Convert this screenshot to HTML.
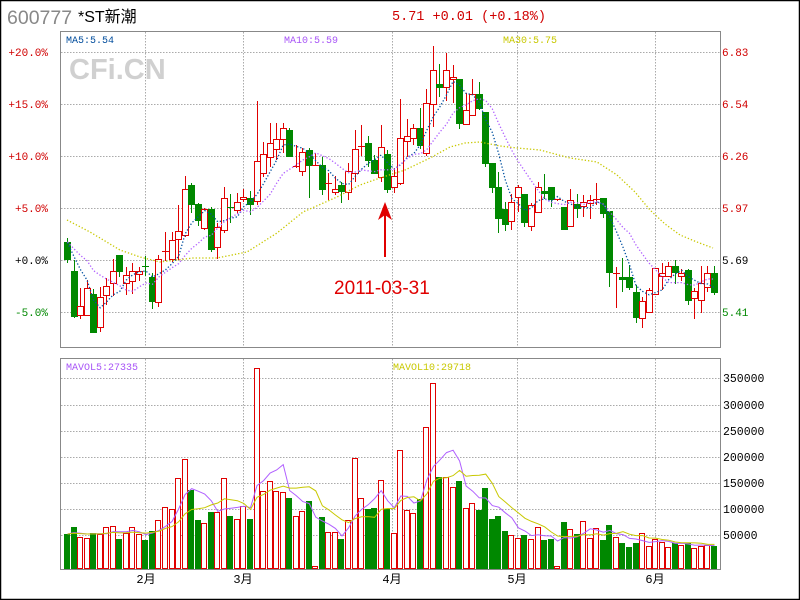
<!DOCTYPE html>
<html><head><meta charset="utf-8"><style>
html,body{margin:0;padding:0;background:#fff;}
svg{display:block;}
text{font-family:"Liberation Mono","Noto Sans CJK SC",monospace;}
</style></head><body>
<svg id="s" width="800" height="600" xmlns="http://www.w3.org/2000/svg">
<rect x="0.5" y="0.5" width="799" height="599" fill="#fff" stroke="#000" stroke-width="1.5"/>
<text x="7" y="24" font-size="19.5" fill="#888" style="font-family:'Liberation Sans',sans-serif">600777</text>
<text x="78" y="22" font-size="16" fill="#000" style="font-family:'Liberation Sans','Noto Sans CJK SC',sans-serif">*ST新潮</text>
<text x="392" y="20" font-size="13.5" fill="#d00000">5.71 +0.01 (+0.18%)</text>
<g id="grid" stroke="#aaa" stroke-dasharray="1.5 1.5" stroke-width="1"></g>
<rect x="60.5" y="31.5" width="660" height="316" fill="none" stroke="#888"/>
<rect x="60.5" y="358.5" width="660" height="211" fill="none" stroke="#888"/>
<text x="69" y="79" font-size="29" font-weight="bold" fill="#d0d0d0" style="font-family:'Liberation Sans',sans-serif">CFi.CN</text>
<text x="66" y="43" font-size="10" fill="#004c9c">MA5:5.54</text>
<text x="284" y="43" font-size="10" fill="#a855f7">MA10:5.59</text>
<text x="503" y="43" font-size="10" fill="#c8c800">MA30:5.75</text>
<text x="66" y="370" font-size="10" fill="#a855f7">MAVOL5:27335</text>
<text x="393" y="370" font-size="10" fill="#c8c800">MAVOL10:29718</text>
<g font-size="11" text-anchor="end">
<text x="48" y="56" fill="#d00000">+20.0%</text>
<text x="48" y="108" fill="#d00000">+15.0%</text>
<text x="48" y="160" fill="#d00000">+10.0%</text>
<text x="48" y="212" fill="#d00000">+5.0%</text>
<text x="48" y="264" fill="#000">+0.0%</text>
<text x="48" y="316" fill="#008800">-5.0%</text>
</g>
<g font-size="11">
<text x="722" y="56" fill="#d00000">6.83</text>
<text x="722" y="108" fill="#d00000">6.54</text>
<text x="722" y="160" fill="#d00000">6.26</text>
<text x="722" y="212" fill="#d00000">5.97</text>
<text x="722" y="264" fill="#000">5.69</text>
<text x="722" y="316" fill="#008800">5.41</text>
</g>
<g font-size="11.5" fill="#000" style="font-family:'Liberation Sans',sans-serif">
<text x="723" y="382">350000</text>
<text x="723" y="409">300000</text>
<text x="723" y="435">250000</text>
<text x="723" y="461">200000</text>
<text x="723" y="487">150000</text>
<text x="723" y="513">100000</text>
<text x="723" y="539">50000</text>
</g>
<g font-size="12" fill="#000" text-anchor="middle" style="font-family:'Liberation Sans','Noto Sans CJK SC',sans-serif">
<text x="146" y="583">2月</text>
<text x="243" y="583">3月</text>
<text x="392" y="583">4月</text>
<text x="517" y="583">5月</text>
<text x="655" y="583">6月</text>
</g>
<g id="vol"></g>
<g id="cdl"></g>
<g id="ma"></g>
<text x="334" y="294" font-size="19" fill="#e00000" style="font-family:'Liberation Sans',sans-serif">2011-03-31</text>
<line x1="385" y1="215" x2="385" y2="257" stroke="#e00000" stroke-width="2"/>
<polygon points="385,202 378,220 385,215 392,220" fill="#e00000"/>
</svg>
<script>
var NS="http://www.w3.org/2000/svg";
function el(p,t,a){var e=document.createElementNS(NS,t);for(var k in a)e.setAttribute(k,a[k]);p.appendChild(e);return e;}
var g=document.getElementById('grid');
[52,104,156,208,260,312].forEach(function(y){el(g,'line',{x1:61,x2:720,y1:y+.5,y2:y+.5});});
[378,405,431,457,483,509,535].forEach(function(y){el(g,'line',{x1:61,x2:720,y1:y+.5,y2:y+.5});});
[145,243,392,517,655].forEach(function(x){el(g,'line',{x1:x+.5,x2:x+.5,y1:32,y2:347});el(g,'line',{x1:x+.5,x2:x+.5,y1:359,y2:569});});
var C=[
['g',242,259,238,263],['g',271,316,260,318],['r',306,315,288,319],['r',288,315,280,316],['g',294,332,289,333],
['r',297,327,287,332],['r',286,295,278,305],['r',271,283,259,296],['g',255,271,255,277],['r',275,283,267,295],
['r',271,281,263,294],['r',271,274,267,281],['g',266,267,256,275],['g',277,301,273,309],['r',259,302,255,307],
['r',251,252,232,260],['r',240,259,232,262],['r',231,239,205,260],['r',189,235,176,237],['g',185,204,183,213],
['g',204,220,203,226],['r',209,228,208,230],['g',209,249,207,252],['r',227,247,223,259],['r',198,230,187,233],
['g',207,208,194,222],['r',202,210,193,214],['r',197,199,189,202],['g',198,204,191,215],['r',161,201,101,205],
['r',154,173,142,177],['r',143,157,123,167],['r',139,149,123,160],['r',128,139,123,153],['g',130,156,128,156],
['r',166,167,145,167],['r',152,171,148,176],['g',150,165,148,198],['r',165,166,153,165],['g',165,189,157,195],
['r',183,184,173,199],['r',189,192,176,195],['g',185,191,182,203],['r',171,192,163,200],['r',149,173,130,182],
['r',146,147,125,155],['g',143,160,136,167],['g',160,173,155,173],['r',147,177,125,182],['g',154,189,150,193],
['r',176,187,168,193],['r',138,183,99,185],['r',136,141,119,157],['r',128,138,124,145],['g',128,145,108,149],
['r',103,153,89,156],['r',70,104,46,127],['g',84,87,64,97],['r',70,87,53,101],['r',77,79,65,103],
['g',79,123,79,129],['r',110,124,93,124],['r',94,115,79,115],['g',94,108,82,110],['g',112,163,112,167],
['g',163,187,163,193],['g',187,218,172,233],['g',209,224,202,231],['r',202,221,194,230],['r',187,197,185,212],
['g',194,222,194,227],['r',205,226,203,231],['r',187,212,182,213],['g',191,193,174,199],['g',187,199,187,207],
['r',199,200,199,200],['g',207,229,207,229],['r',200,226,189,227],['g',204,208,194,218],['r',202,206,195,217],
['r',200,203,195,219],['r',199,200,183,204],['g',198,213,198,218],['g',211,272,211,287],['r',273,274,267,307],
['g',277,279,258,292],['g',277,287,265,290],['g',292,317,285,323],['r',301,318,297,328],['r',290,312,288,313],
['r',268,294,268,294],['r',273,276,263,290],['r',266,276,262,277],['g',266,272,260,284],['r',273,276,269,281],
['g',270,300,269,305],['r',291,298,288,319],['r',283,300,266,313],['r',273,287,266,292],['g',273,292,266,295]];
var V=[534,527,537,538,533,534,527,526,539,533,527,534,540,531,520,507,509,478,459,490,520,523,512,512,478,516,519,506,519,368,
491,481,491,492,498,516,511,501,566,517,532,532,539,520,458,498,509,508,480,509,533,450,510,513,499,427,383,477,477,487,
481,508,503,510,488,519,516,531,535,538,535,539,527,540,539,566,522,529,534,521,538,528,540,525,537,543,547,543,533,546,
539,542,547,543,545,543,548,546,545,546];
var RED="#e00000",GRN="#008800";
var cg=document.getElementById('cdl'),vg=document.getElementById('vol'),mg=document.getElementById('ma');
var closes=[];
C.forEach(function(c,i){
 var cx=Math.round(67+i*6.535), red=c[0]=='r', col=red?RED:GRN;
 var bt=c[1],bb=c[2],wt=c[3],wb=c[4];
 closes.push(red?bt:bb);
 if(bb-bt<2){
  el(cg,'line',{x1:cx+.5,x2:cx+.5,y1:wt,y2:wb+1,stroke:col});
  el(cg,'rect',{x:cx-3,y:bt,width:7,height:Math.max(1,bb-bt),fill:col});
 }else if(red){
  if(wt<bt)el(cg,'line',{x1:cx+.5,x2:cx+.5,y1:wt,y2:bt,stroke:col});
  if(wb>bb)el(cg,'line',{x1:cx+.5,x2:cx+.5,y1:bb,y2:wb,stroke:col});
  el(cg,'rect',{x:cx-2.5,y:bt+.5,width:6,height:bb-bt,fill:'#fff',stroke:col});
 }else{
  el(cg,'line',{x1:cx+.5,x2:cx+.5,y1:wt,y2:wb,stroke:col});
  el(cg,'rect',{x:cx-3,y:bt,width:7,height:bb-bt+1,fill:col});
 }
 var t=V[i];
 if(t<568){
  if(red) el(vg,'rect',{x:cx-2.5,y:t+.5,width:5,height:569-t-1,fill:'#fff',stroke:RED});
  else el(vg,'rect',{x:cx-3,y:t,width:6,height:569-t,fill:GRN});
 }
});
function ma(arr,n){var r=[];for(var i=0;i<arr.length;i++){var s=0,k=0;for(var j=Math.max(0,i-n+1);j<=i;j++){s+=arr[j];k++;}r.push(s/k);}return r;}
function pts(a){return a.map(function(v,i){return (67+i*6.535+.5).toFixed(1)+','+v.toFixed(1);}).join(' ');}
var pre=[252,246,240,236,232];
var ext=pre.concat(closes);
var m5=ma(ext,5).slice(5), m10=ma(pre.concat(pre).concat(closes),10).slice(10);
el(mg,'polyline',{points:pts(m5),fill:'none',stroke:'#0050a0','stroke-width':1.3,'stroke-dasharray':'1.3 2'});
el(mg,'polyline',{points:pts(m10),fill:'none',stroke:'#b060ff','stroke-width':1.3,'stroke-dasharray':'1.3 2'});
el(mg,'polyline',{points:'67,220 90,232 120,250 140,257 160,262 193,258 217,258 247,252 277,233 303,212 337,197 360,185 380,178 405,170 430,158 450,147 465,143 480,142 500,146 517,148 540,150 570,158 597,162 617,175 635,192 650,210 665,224 680,235 697,242 713,248',fill:'none',stroke:'#c8c800','stroke-width':1.3,'stroke-dasharray':'1.3 2'});
var vpre=[534,534,534,534,534,534,534,534,534];
var vx=vpre.concat(V.map(function(v){return v>=566?560:v;}));
var v5=ma(vx,5).slice(9), v10=ma(vx,10).slice(9);
el(mg,'polyline',{points:pts(v5),fill:'none',stroke:'#b060ff','stroke-width':1});
el(mg,'polyline',{points:pts(v10),fill:'none',stroke:'#c8c800','stroke-width':1});
</script>
</body></html>
